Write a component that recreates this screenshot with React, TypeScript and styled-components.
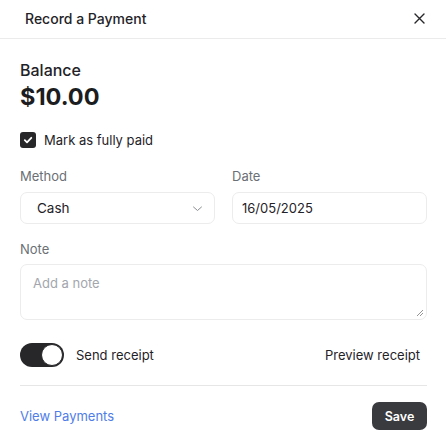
import React from "react";
import styled, { createGlobalStyle } from "styled-components";

const Global = createGlobalStyle`
  html, body { margin: 0; padding: 0; background: #ffffff; }
  body { font-family: Inter, "Noto Sans", Arial, sans-serif; color: #1f2328; -webkit-font-smoothing: antialiased; }
  * { box-sizing: border-box; }
`;

const Modal = styled.div`
  width: 446px;
  height: 447px;
  background: #ffffff;
  display: flex;
  flex-direction: column;
  overflow: hidden;
`;

const Header = styled.div`
  height: 39px;
  border-bottom: 1px solid #ebebeb;
  display: flex;
  align-items: center;
  justify-content: space-between;
  padding: 0 20px 2px 25px;
`;

const Title = styled.div`
  font-size: 14px;
  font-weight: 500;
  color: #1f2328;
`;

const CloseBtn = styled.button`
  border: none;
  background: none;
  padding: 0;
  margin: 0;
  width: 14px;
  height: 14px;
  display: flex;
  align-items: center;
  justify-content: center;
  color: #27272a;
  cursor: pointer;
`;

const Body = styled.div`
  display: flex;
  flex-direction: column;
  padding: 21px 19px 0 20px;
`;

const BalanceLabel = styled.div`
  font-size: 16px;
  line-height: 20px;
  font-weight: 500;
  color: #1f2328;
`;

const Amount = styled.div`
  font-size: 23.5px;
  line-height: 28px;
  font-weight: 700;
  color: #1b1d21;
  margin-top: 3px;
`;

const CheckRow = styled.label`
  display: flex;
  align-items: center;
  gap: 8px;
  margin-top: 21px;
  font-size: 13px;
  color: #1f2328;
`;

const CheckBox = styled.span`
  width: 16px;
  height: 16px;
  border-radius: 3px;
  background: #27272a;
  display: flex;
  align-items: center;
  justify-content: center;
`;

const Grid = styled.div`
  display: grid;
  grid-template-columns: 1fr 1fr;
  column-gap: 17px;
  margin-top: 19px;
`;

const Field = styled.div`
  display: flex;
  flex-direction: column;
`;

const Label = styled.div<{ $top?: number }>`
  font-size: 13px;
  line-height: 18px;
  color: #6b6f76;
  margin-top: ${(p) => p.$top ?? 0}px;
`;

const InputBox = styled.div`
  margin-top: 7px;
  height: 32px;
  border: 1px solid #ececec;
  border-radius: 7px;
  display: flex;
  align-items: center;
  justify-content: space-between;
  padding: 0 11px 0 16px;
  font-size: 13.5px;
  color: #1f2328;
`;

const DateBox = styled(InputBox)`
  padding-left: 9px;
  font-size: 13px;
`;

const TextArea = styled.div`
  margin-top: 6px;
  height: 56px;
  border: 1px solid #ececec;
  border-radius: 7px;
  padding: 10px 12px;
  font-size: 13px;
  color: #a3a6ad;
  position: relative;
`;

const Grip = styled.svg`
  position: absolute;
  right: 2px;
  bottom: 2px;
`;

const ToggleRow = styled.div`
  margin-top: 23px;
  display: flex;
  align-items: center;
  justify-content: space-between;
  padding-right: 7px;
`;

const ToggleGroup = styled.div`
  display: flex;
  align-items: center;
  gap: 12px;
  font-size: 13px;
  color: #1f2328;
`;

const Toggle = styled.span`
  width: 44px;
  height: 24px;
  border-radius: 12px;
  background: #27272a;
  position: relative;
  display: inline-block;
`;

const Knob = styled.span`
  position: absolute;
  right: 1px;
  top: 1px;
  width: 22px;
  height: 22px;
  border-radius: 50%;
  background: #ffffff;
  border: 1.5px solid #27272a;
`;

const TextButton = styled.span`
  font-size: 13px;
  color: #1f2328;
`;

const Divider = styled.div`
  margin-top: 18px;
  height: 1px;
  background: #e6e6e6;
`;

const Footer = styled.div`
  margin-top: 16px;
  display: flex;
  align-items: center;
  justify-content: space-between;
`;

const Link = styled.a`
  font-size: 13px;
  color: #4f7de8;
  text-decoration: none;
`;

const SaveBtn = styled.button`
  width: 55px;
  height: 28px;
  border: none;
  border-radius: 7px;
  background: #3a3b3f;
  color: #ffffff;
  font-family: inherit;
  font-size: 12.5px;
  font-weight: 600;
  padding: 0;
`;

export default function App() {
  return (
    <>
      <Global />
      <Modal>
        <Header>
          <Title>Record a Payment</Title>
          <CloseBtn aria-label="Close">
            <svg width="11" height="11" viewBox="0 0 11 11" fill="none">
              <path d="M1 1L10 10M10 1L1 10" stroke="#27272a" strokeWidth="1.4" strokeLinecap="round" />
            </svg>
          </CloseBtn>
        </Header>
        <Body>
          <BalanceLabel>Balance</BalanceLabel>
          <Amount>$10.00</Amount>
          <CheckRow>
            <CheckBox>
              <svg width="10" height="10" viewBox="0 0 10 10" fill="none">
                <path d="M1.8 5.2L4 7.3L8.3 2.8" stroke="#fff" strokeWidth="1.8" strokeLinecap="round" strokeLinejoin="round" />
              </svg>
            </CheckBox>
            Mark as fully paid
          </CheckRow>
          <Grid>
            <Field>
              <Label>Method</Label>
              <InputBox>
                <span>Cash</span>
                <svg width="11" height="11" viewBox="0 0 11 11" fill="none">
                  <path d="M1.5 4L5.5 7.5L9.5 4" stroke="#8a8d93" strokeWidth="1" strokeLinecap="round" strokeLinejoin="round" />
                </svg>
              </InputBox>
            </Field>
            <Field>
              <Label>Date</Label>
              <DateBox>
                <span>16/05/2025</span>
              </DateBox>
            </Field>
          </Grid>
          <Label $top={16}>Note</Label>
          <TextArea>
            Add a note
            <Grip width="8" height="8" viewBox="0 0 8 8" fill="none">
              <path d="M7 1L1 7M7 4L4 7" stroke="#7a7a7a" strokeWidth="0.8" />
            </Grip>
          </TextArea>
          <ToggleRow>
            <ToggleGroup>
              <Toggle>
                <Knob />
              </Toggle>
              Send receipt
            </ToggleGroup>
            <TextButton>Preview receipt</TextButton>
          </ToggleRow>
          <Divider />
          <Footer>
            <Link href="#">View Payments</Link>
            <SaveBtn>Save</SaveBtn>
          </Footer>
        </Body>
      </Modal>
    </>
  );
}
